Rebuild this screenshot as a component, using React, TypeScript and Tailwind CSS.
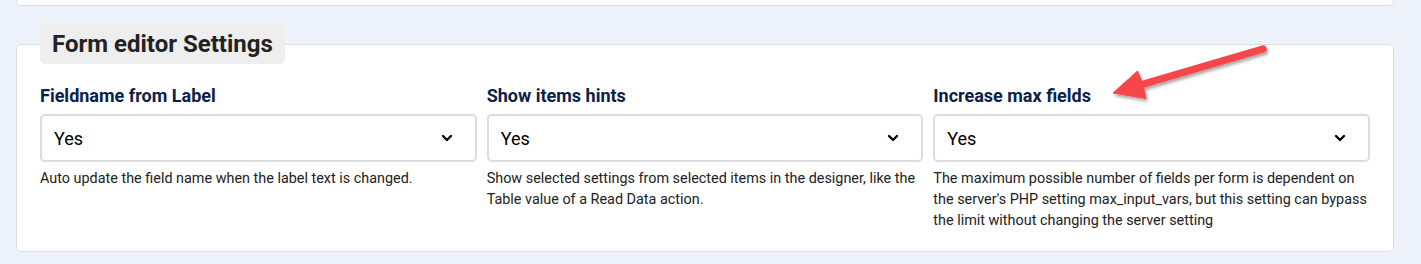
import { ChevronDown } from "lucide-react";

const settings = [
  {
    label: "Fieldname from Label",
    value: "Yes",
    help: "Auto update the field name when the label text is changed.",
  },
  {
    label: "Show items hints",
    value: "Yes",
    help: "Show selected settings from selected items in the designer, like the Table value of a Read Data action.",
  },
  {
    label: "Increase max fields",
    value: "Yes",
    help: "The maximum possible number of fields per form is dependent on the server's PHP setting max_input_vars, but this setting can bypass the limit without changing the server setting",
  },
];

function Arrow() {
  return (
    <svg
      className="pointer-events-none absolute left-[1100px] top-[36px]"
      width="180"
      height="75"
      viewBox="0 0 180 75"
    >
      <defs>
        <filter id="shadow" x="-20%" y="-40%" width="140%" height="180%">
          <feDropShadow dx="1.5" dy="2.5" stdDeviation="1.6" floodColor="#000" floodOpacity="0.35" />
        </filter>
      </defs>
      <g filter="url(#shadow)" fill="#f5474a" stroke="#f5474a">
        <line x1="163" y1="13" x2="42" y2="48.5" strokeWidth="7.5" strokeLinecap="round" />
        <polygon points="13,57 37.5,35 43,48.5 46,62.5" strokeWidth="1" strokeLinejoin="round" />
      </g>
    </svg>
  );
}

export default function App() {
  return (
    <div className="relative min-h-[264px] bg-[#eef3fb] pl-4 font-['Roboto',_'Liberation_Sans',_sans-serif]">
      <div className="h-[6px] w-[1378px] rounded-b-[5px] border border-t-0 border-[#dadde2] bg-white" />

      <fieldset className="mt-[18px] w-[1378px] rounded-[5px] border border-[#dadde2] bg-white px-[23px] pt-5 pb-[20px]">
        <legend className="h-10 rounded-[5px] bg-[#eeeeee] px-3 text-[24px] leading-10 font-bold text-[#222]">
          Form editor Settings
        </legend>

        <div className="grid grid-cols-3 gap-[10px]">
          {settings.map((s) => (
            <div key={s.label}>
              <div className="mb-1.5 text-[18px] leading-6 font-bold text-[#0c2148]">{s.label}</div>
              <div className="flex h-12 items-center justify-between rounded-[5px] border-2 border-[#dcdcdc] bg-white pr-[20px] pl-[12px]">
                <span className="text-[18px] text-black">{s.value}</span>
                <ChevronDown className="h-4 w-4 text-black" strokeWidth={3.5} />
              </div>
              <p className="mt-1.5 text-[14.4px] leading-[21px] text-[#222]">{s.help}</p>
            </div>
          ))}
        </div>
      </fieldset>

      <Arrow />
    </div>
  );
}
